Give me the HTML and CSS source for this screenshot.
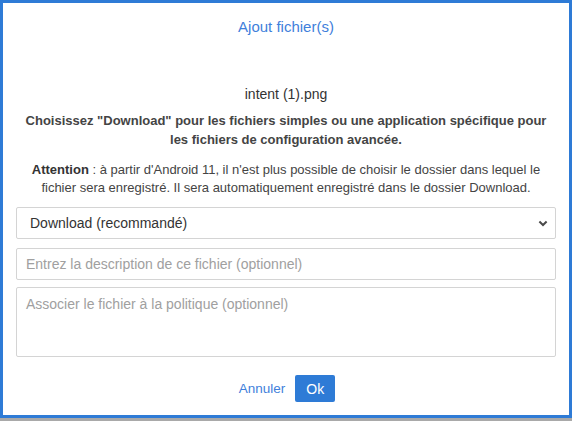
FILE: index.html
```html
<!DOCTYPE html>
<html lang="fr">
<head>
<meta charset="utf-8">
<title>Ajout fichier(s)</title>
<link rel="stylesheet" href="styles.css">
</head>
<body>
<div class="modal">
  <h1 class="title">Ajout fichier(s)</h1>
  <p class="filename">intent (1).png</p>
  <p class="hint">Choisissez "Download" pour les fichiers simples ou une application spécifique pour les fichiers de configuration avancée.</p>
  <p class="warning"><strong>Attention</strong> : à partir d'Android 11, il n'est plus possible de choisir le dossier dans lequel le fichier sera enregistré. Il sera automatiquement enregistré dans le dossier Download.</p>
  <div class="field select">
    <span>Download (recommandé)</span>
    <svg class="chevron" width="10" height="7" viewBox="0 0 10 7"><path d="M1.4 1.5 L5 5 L8.6 1.5" fill="none" stroke="#4a4a4a" stroke-width="2"/></svg>
  </div>
  <div class="field input"><span class="placeholder">Entrez la description de ce fichier (optionnel)</span></div>
  <div class="field textarea"><span class="placeholder">Associer le fichier à la politique (optionnel)</span></div>
  <div class="actions">
    <a class="cancel">Annuler</a>
    <button class="ok">Ok</button>
  </div>
</div>
</body>
</html>
```
FILE: styles.css
```css
html, body {
  margin: 0;
  padding: 0;
  background: #a9a9a9;
  width: 572px;
  height: 421px;
  overflow: hidden;
}
.modal {
  box-sizing: border-box;
  width: 572px;
  height: 418px;
  border: 3px solid #2e7bd6;
  background: #fff;
  font-family: "Liberation Sans", Arial, sans-serif;
  color: #333;
  padding: 0 13px;
  display: flex;
  flex-direction: column;
}
.title {
  margin: 0;
  padding-top: 15px;
  font-size: 15px;
  font-weight: normal;
  line-height: 17px;
  text-align: center;
  color: #3f7fdb;
}
.filename {
  margin: 51px 0 0;
  font-size: 14px;
  line-height: 17px;
  text-align: center;
}
.hint {
  margin: 8px 0 0;
  font-size: 13px;
  font-weight: bold;
  line-height: 19px;
  text-align: center;
  color: #444;
}
.warning {
  margin: 12px 0 0;
  font-size: 13px;
  line-height: 18px;
  text-align: center;
  color: #444;
}
.warning strong { color: #333; }
.field {
  box-sizing: border-box;
  border: 1px solid #d4d4d4;
  border-radius: 2px;
  font-size: 14px;
  display: flex;
  align-items: center;
}
.select {
  margin-top: 10px;
  height: 32px;
  padding: 0 7px 0 13px;
  justify-content: space-between;
  color: #333;
}
.input {
  margin-top: 9px;
  height: 32px;
  padding: 0 9px;
}
.textarea {
  margin-top: 7px;
  height: 70px;
  align-items: flex-start;
  padding: 8px 9px;
}
.placeholder { color: #a0a0a0; }
.actions {
  margin-top: 18px;
  display: flex;
  justify-content: center;
  align-items: center;
  gap: 10px;
  padding-left: 2px;
}
.cancel {
  font-size: 13.5px;
  color: #3f7fdb;
}
.ok {
  width: 40px;
  height: 27px;
  border: none;
  border-radius: 2px;
  background: #2e7bd6;
  color: #fff;
  font-family: "Liberation Sans", Arial, sans-serif;
  font-size: 14px;
  padding: 0;
}
```
